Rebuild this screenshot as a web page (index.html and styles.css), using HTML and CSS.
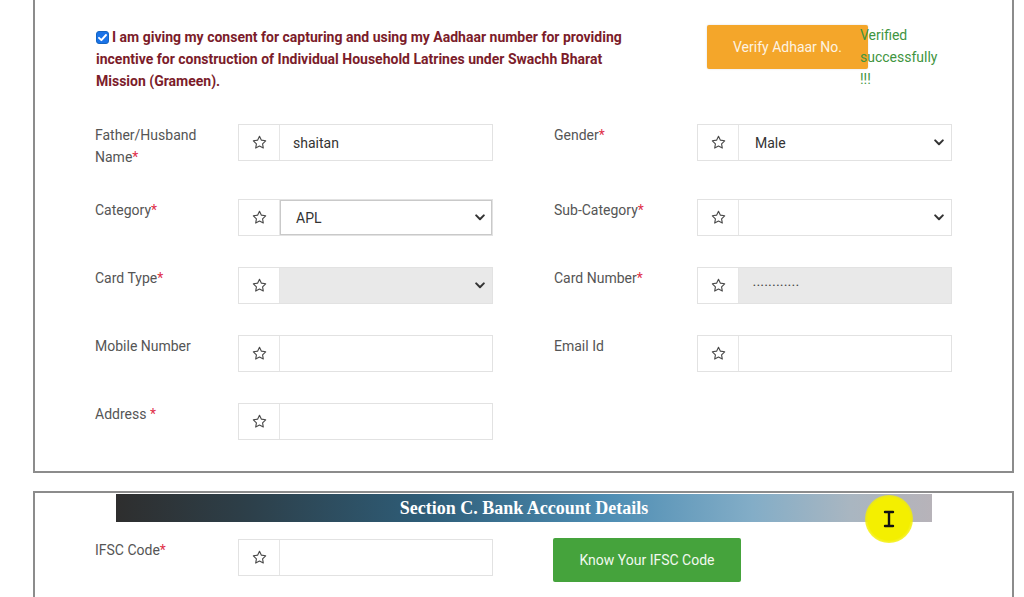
FILE: index.html
```html
<!DOCTYPE html>
<html lang="en">
<head>
<meta charset="utf-8">
<title>SBM Application Form</title>
<link rel="stylesheet" href="styles.css">
</head>
<body>
<div class="page">
  <section class="panel panel-top">
    <div class="consent-row">
      <p class="consent"><span class="check"><svg viewBox="0 0 13 13" width="13" height="13"><rect x="0.5" y="0.5" width="12" height="12" rx="2.5" fill="#1a73e8" stroke="#1565c0"/><path d="M3 6.8l2.4 2.4L10 4" fill="none" stroke="#fff" stroke-width="1.9" stroke-linecap="round" stroke-linejoin="round"/></svg></span>I am giving my consent for capturing and using my Aadhaar number for providing incentive for construction of Individual Household Latrines under Swachh Bharat Mission (Grameen).</p>
      <div class="verify">
        <button class="btn btn-orange" type="button">Verify Adhaar No.</button>
        <span class="verified">Verified successfully !!!</span>
      </div>
    </div>

    <div class="form-grid">
      <div class="field">
        <div class="lbl"><span class="lbl-text">Father/Husband</span> <span class="lbl-text">Name<span class="req">*</span></span></div>
        <div class="group"><span class="addon"><svg class="star" viewBox="0 0 24 24"><path d="M12 3.2l2.7 5.5 6 .9-4.35 4.25 1.03 6L12 17l-5.38 2.85 1.03-6L3.3 9.6l6-.9z"/></svg></span><span class="ctl">shaitan</span></div>
      </div>
      <div class="field">
        <div class="lbl">Gender<span class="req">*</span></div>
        <div class="group"><span class="addon"><svg class="star" viewBox="0 0 24 24"><path d="M12 3.2l2.7 5.5 6 .9-4.35 4.25 1.03 6L12 17l-5.38 2.85 1.03-6L3.3 9.6l6-.9z"/></svg></span><span class="ctl sel">Male<svg class="chev" viewBox="0 0 10 7"><path d="M1.2 1.4L5 5.2l3.8-3.8"/></svg></span></div>
      </div>

      <div class="field">
        <div class="lbl">Category<span class="req">*</span></div>
        <div class="group"><span class="addon"><svg class="star" viewBox="0 0 24 24"><path d="M12 3.2l2.7 5.5 6 .9-4.35 4.25 1.03 6L12 17l-5.38 2.85 1.03-6L3.3 9.6l6-.9z"/></svg></span><span class="ctl sel focus">APL<svg class="chev" viewBox="0 0 10 7"><path d="M1.2 1.4L5 5.2l3.8-3.8"/></svg></span></div>
      </div>
      <div class="field">
        <div class="lbl">Sub-Category<span class="req">*</span></div>
        <div class="group"><span class="addon"><svg class="star" viewBox="0 0 24 24"><path d="M12 3.2l2.7 5.5 6 .9-4.35 4.25 1.03 6L12 17l-5.38 2.85 1.03-6L3.3 9.6l6-.9z"/></svg></span><span class="ctl sel"><svg class="chev" viewBox="0 0 10 7"><path d="M1.2 1.4L5 5.2l3.8-3.8"/></svg></span></div>
      </div>

      <div class="field">
        <div class="lbl">Card Type<span class="req">*</span></div>
        <div class="group"><span class="addon"><svg class="star" viewBox="0 0 24 24"><path d="M12 3.2l2.7 5.5 6 .9-4.35 4.25 1.03 6L12 17l-5.38 2.85 1.03-6L3.3 9.6l6-.9z"/></svg></span><span class="ctl sel disabled"><svg class="chev" viewBox="0 0 10 7"><path d="M1.2 1.4L5 5.2l3.8-3.8"/></svg></span></div>
      </div>
      <div class="field">
        <div class="lbl">Card Number<span class="req">*</span></div>
        <div class="group"><span class="addon"><svg class="star" viewBox="0 0 24 24"><path d="M12 3.2l2.7 5.5 6 .9-4.35 4.25 1.03 6L12 17l-5.38 2.85 1.03-6L3.3 9.6l6-.9z"/></svg></span><span class="ctl disabled dots">••••••••••••</span></div>
      </div>

      <div class="field">
        <div class="lbl">Mobile Number</div>
        <div class="group"><span class="addon"><svg class="star" viewBox="0 0 24 24"><path d="M12 3.2l2.7 5.5 6 .9-4.35 4.25 1.03 6L12 17l-5.38 2.85 1.03-6L3.3 9.6l6-.9z"/></svg></span><span class="ctl"></span></div>
      </div>
      <div class="field">
        <div class="lbl">Email Id</div>
        <div class="group"><span class="addon"><svg class="star" viewBox="0 0 24 24"><path d="M12 3.2l2.7 5.5 6 .9-4.35 4.25 1.03 6L12 17l-5.38 2.85 1.03-6L3.3 9.6l6-.9z"/></svg></span><span class="ctl"></span></div>
      </div>

      <div class="field">
        <div class="lbl">Address <span class="req">*</span></div>
        <div class="group"><span class="addon"><svg class="star" viewBox="0 0 24 24"><path d="M12 3.2l2.7 5.5 6 .9-4.35 4.25 1.03 6L12 17l-5.38 2.85 1.03-6L3.3 9.6l6-.9z"/></svg></span><span class="ctl"></span></div>
      </div>
    </div>
  </section>

  <section class="panel panel-bank">
    <h2 class="sec-head">Section C. Bank Account Details</h2>
    <div class="form-grid bank-grid">
      <div class="field">
        <div class="lbl">IFSC Code<span class="req">*</span></div>
        <div class="group"><span class="addon"><svg class="star" viewBox="0 0 24 24"><path d="M12 3.2l2.7 5.5 6 .9-4.35 4.25 1.03 6L12 17l-5.38 2.85 1.03-6L3.3 9.6l6-.9z"/></svg></span><span class="ctl"></span></div>
      </div>
      <div class="field-btn">
        <button class="btn btn-green" type="button">Know Your IFSC Code</button>
      </div>
    </div>
  </section>

  <div class="cursor-spot"><svg viewBox="0 0 12 18" width="12" height="18"><path d="M2 2h8M2 16h8M6 2v14" fill="none" stroke="#111" stroke-width="2.4" stroke-linecap="round"/></svg></div>
</div>
</body>
</html>
```

FILE: styles.css
```css
* { box-sizing: border-box; }

html, body {
  margin: 0;
  padding: 0;
  background: #ffffff;
  overflow: hidden;
}

body {
  font-family: Roboto, "Noto Sans", "Liberation Sans", sans-serif;
  color: #555;
}

.page {
  position: relative;
  width: 1024px;
  height: 597px;
}

.panel {
  margin-left: 33px;
  width: 981px;
  border: 2px solid #8c8c8c;
  background: #fff;
}

.panel-top {
  border-top: none;
  padding: 26px 0 31px 60px;
}

.consent-row {
  display: flex;
  align-items: flex-start;
}

.consent {
  margin: 0 0 0 1px;
  width: 535px;
  flex: 0 0 535px;
  font-size: 14px;
  font-weight: 700;
  line-height: 22px;
  color: #7b1c2a;
}

.check {
  display: inline-block;
  width: 13px;
  height: 13px;
  margin-right: 3px;
  vertical-align: -2px;
}
.check svg { display: block; }

.verify {
  display: flex;
  align-items: flex-start;
  margin-left: 76px;
  margin-top: -1px;
}

.btn {
  border: none;
  border-radius: 2px;
  color: #fff;
  font-family: Roboto, "Liberation Sans", sans-serif;
  font-size: 14px;
  cursor: pointer;
}

.btn-orange {
  width: 161px;
  height: 44px;
  background: #f4a62a;
  color: #fdf3e2;
  box-shadow: 0 0 2px rgba(0,0,0,0.15);
}

.verified {
  width: 82px;
  margin-left: -8px;
  margin-top: -1px;
  font-size: 14px;
  line-height: 22px;
  color: #3f953f;
  position: relative;
}

.form-grid {
  display: grid;
  grid-template-columns: 398px 398px;
  column-gap: 61px;
  row-gap: 31px;
  margin-top: 32px;
}

.field {
  display: grid;
  grid-template-columns: 143px 255px;
  align-items: start;
}

.lbl {
  font-size: 14px;
  line-height: 22px;
  color: #555;
  padding-right: 30px;
}

.lbl-text { display: inline-block; }

.req { color: #e0304a; }

.group {
  display: flex;
  height: 37px;
  border: 1px solid #e2e2e2;
  background: #fff;
}

.addon {
  flex: 0 0 41px;
  display: flex;
  align-items: center;
  justify-content: center;
  border-right: 1px solid #e6e6e6;
  background: #fff;
}

.star {
  width: 17px;
  height: 17px;
  fill: none;
  stroke: #4a4a4a;
  stroke-width: 1.6;
  stroke-linejoin: round;
}

.ctl {
  flex: 1;
  display: flex;
  align-items: center;
  padding: 0 13px;
  font-size: 14px;
  color: #333;
}

.ctl.sel {
  justify-content: space-between;
  padding: 0 7px 0 16px;
}

.ctl.sel .chev { margin-left: auto; }

.ctl.focus {
  box-shadow: inset 0 0 0 1px #c9c9c9;
}

.ctl.disabled { background: #e9e9e9; }

.ctl.dots {
  font-size: 8px;
  letter-spacing: 1.2px;
  color: #444;
  padding-left: 14px;
}

.chev {
  width: 10px;
  height: 7px;
  fill: none;
  stroke: #333;
  stroke-width: 2;
  stroke-linecap: round;
  stroke-linejoin: round;
}

.panel-bank {
  margin-top: 18px;
  border-bottom: none;
  height: 120px;
  padding-top: 1px;
}

.sec-head {
  margin: 0 80px 0 81px;
  height: 28px;
  line-height: 28px;
  text-align: center;
  font-family: "Liberation Serif", "Times New Roman", serif;
  font-weight: 700;
  font-size: 18px;
  color: #fff;
  background: linear-gradient(to right, #2e2e2e 0%, #2d3f49 16%, #2e5d78 38%, #4d8db3 60%, #83adc7 78%, #a9b6c1 90%, #b7b3b9 100%);
}

.bank-grid {
  margin-top: 17px;
  padding-left: 60px;
}

.field-btn {
  margin-top: -1px;
  margin-left: -1px;
}

.btn-green {
  width: 188px;
  height: 44px;
  background: #45a33c;
  color: #f1f8ef;
}

.cursor-spot {
  position: absolute;
  left: 865px;
  top: 495px;
  width: 48px;
  height: 48px;
  border-radius: 50%;
  background: radial-gradient(circle, #f4ef00 62%, rgba(244, 239, 0, 0.55) 78%, rgba(244, 239, 0, 0) 100%);
  display: flex;
  align-items: center;
  justify-content: center;
}
```
